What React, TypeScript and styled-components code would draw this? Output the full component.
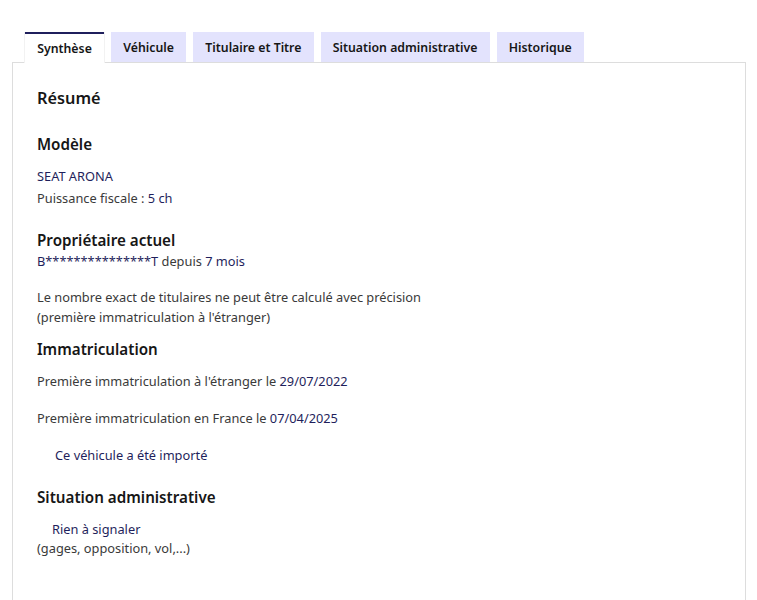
import React from "react";
import styled, { createGlobalStyle } from "styled-components";

const Global = createGlobalStyle`
  html, body { margin: 0; padding: 0; background: #ffffff; }
  body { font-family: "Noto Sans", "DejaVu Sans", sans-serif; color: #3a3a3a; }
  * { box-sizing: border-box; }
`;

const Page = styled.div`
  padding: 32px 11px 0 12px;
`;

const TabList = styled.div`
  display: flex;
  gap: 7px;
  padding-left: 13px;
  height: 30px;
`;

const Tab = styled.div<{ $active?: boolean }>`
  display: flex;
  align-items: center;
  height: 30px;
  padding: 0 12.2px;
  font-size: 12.3px;
  font-weight: 600;
  color: #161616;
  background: ${(p) => (p.$active ? "#ffffff" : "#e3e3fd")};
  border-top: ${(p) => (p.$active ? "2px solid #1f1f5c" : "0")};
  ${(p) =>
    p.$active
      ? "box-shadow: 1px 0 0 #f2f2f2, -1px 0 0 #f2f2f2; position: relative; z-index: 1; margin-bottom: -1px; height: 31px;"
      : ""}
`;

const Panel = styled.div`
  border: 1px solid #dddddd;
  border-bottom: 0;
  min-height: 538px;
  padding: 23px 24px 40px;
`;

const Block = styled.div<{ $gap?: number; $indent?: number }>`
  margin-top: ${(p) => p.$gap ?? 0}px;
  padding-left: ${(p) => p.$indent ?? 0}px;
`;

const Title = styled.h2`
  margin: 0;
  font-size: 16.3px;
  line-height: 24px;
  font-weight: 600;
  color: #161616;
`;

const Heading = styled.h3`
  margin: 0;
  font-size: 15.2px;
  line-height: 24px;
  font-weight: 600;
  color: #161616;
`;

const Text = styled.p<{ $lh?: number }>`
  margin: 0;
  font-size: 12.8px;
  line-height: ${(p) => p.$lh ?? 20}px;
  color: #3a3a3a;
`;

const Value = styled.span`
  color: #1f1f5c;
`;

const Indent = styled.span<{ $indent: number }>`
  padding-left: ${(p) => p.$indent}px;
`;

const tabs = ["Synthèse", "Véhicule", "Titulaire et Titre", "Situation administrative", "Historique"];

export default function App() {
  return (
    <>
      <Global />
      <Page>
        <TabList>
          {tabs.map((t, i) => (
            <Tab key={t} $active={i === 0}>
              {t}
            </Tab>
          ))}
        </TabList>
        <Panel>
          <Title>Résumé</Title>

          <Block $gap={22}>
            <Heading>Modèle</Heading>
          </Block>
          <Block $gap={9}>
            <Text $lh={22}>
              <Value>SEAT ARONA</Value>
            </Text>
            <Text $lh={22}>
              Puissance fiscale : <Value>5 ch</Value>
            </Text>
          </Block>

          <Block $gap={19}>
            <Heading>Propriétaire actuel</Heading>
            <Text $lh={18}>
              <Value>B***************T</Value> depuis <Value>7 mois</Value>
            </Text>
          </Block>
          <Block $gap={17}>
            <Text>
              Le nombre exact de titulaires ne peut être calculé avec précision
              <br />
              (première immatriculation à l'étranger)
            </Text>
          </Block>

          <Block $gap={10}>
            <Heading>Immatriculation</Heading>
          </Block>
          <Block $gap={10}>
            <Text>
              Première immatriculation à l'étranger le <Value>29/07/2022</Value>
            </Text>
          </Block>
          <Block $gap={17}>
            <Text>
              Première immatriculation en France le <Value>07/04/2025</Value>
            </Text>
          </Block>
          <Block $gap={17} $indent={18}>
            <Text>
              <Value>Ce véhicule a été importé</Value>
            </Text>
          </Block>

          <Block $gap={20}>
            <Heading>Situation administrative</Heading>
          </Block>
          <Block $gap={10}>
            <Text>
              <Indent $indent={15}>
                <Value>Rien à signaler</Value>
              </Indent>
            </Text>
            <Text $lh={19}>(gages, opposition, vol,...)</Text>
          </Block>
        </Panel>
      </Page>
    </>
  );
}
